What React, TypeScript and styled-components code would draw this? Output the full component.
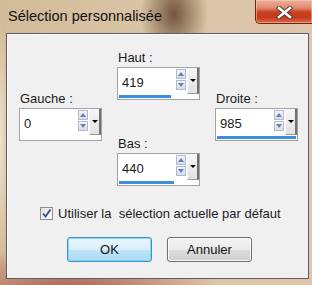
import React from "react";
import styled, { createGlobalStyle } from "styled-components";

const GlobalStyle = createGlobalStyle`
  html, body {
    margin: 0;
    padding: 0;
  }
  body {
    width: 312px;
    height: 285px;
    overflow: hidden;
    font-family: "Liberation Sans", Arial, sans-serif;
    color: #1b1b1b;
  }
`;

const Frame = styled.div`
  width: 312px;
  height: 285px;
  box-sizing: border-box;
  display: flex;
  flex-direction: column;
  padding: 0 3px 6px 6px;
  background-color: #d6c3a6;
  background-image:
    radial-gradient(34px 48px at 174px 14px, rgba(104, 74, 48, 0.9), rgba(104, 74, 48, 0) 100%),
    radial-gradient(150px 46px at 70px 292px, rgba(168, 88, 82, 0.95), rgba(168, 88, 82, 0) 100%),
    radial-gradient(10px 120px at 0px 140px, rgba(240, 232, 214, 0.9), rgba(240, 232, 214, 0) 100%),
    linear-gradient(90deg, #d3bb99 0%, #d8c3a4 40%, #dcc5a8 70%, #e1c6ad 100%);
`;

const TitleBar = styled.div`
  height: 33px;
  display: flex;
  align-items: flex-start;
`;

const Title = styled.div`
  padding: 8px 0 0 2px;
  font-size: 14.5px;
  line-height: 17px;
  color: #111;
`;

const CloseButton = styled.div`
  margin-left: auto;
  margin-right: -3px;
  margin-top: -1px;
  width: 57px;
  height: 25px;
  box-sizing: border-box;
  border: 1px solid #6b2417;
  border-right: none;
  border-radius: 0 0 0 5px;
  display: flex;
  align-items: center;
  justify-content: center;
  padding: 2px 0 0 0;
  background: linear-gradient(
    180deg,
    #eeb09c 0%,
    #e08a70 35%,
    #c9401f 52%,
    #c63a1c 75%,
    #dc6a45 100%
  );
  box-shadow: inset 0 0 0 1px rgba(255, 210, 190, 0.5);
`;

const Client = styled.div`
  flex: 1;
  display: flex;
  flex-direction: column;
  background: #f0f0f0;
  border: 1px solid #5e5e5e;
  box-shadow: inset 1px 1px 0 #fdfdfd;
`;

const Fields = styled.div`
  display: grid;
  grid-template-columns: repeat(3, 83px);
  column-gap: 15px;
  padding-left: 12px;
  align-items: start;
`;

const Column = styled.div<{ $offset: number }>`
  display: flex;
  flex-direction: column;
  gap: 36px;
  padding-top: ${(p) => p.$offset}px;
`;

const Field = styled.div`
  display: flex;
  flex-direction: column;
  gap: 2px;
`;

const Label = styled.div`
  font-size: 13px;
  line-height: 15px;
  padding-left: 1px;
`;

const Box = styled.div`
  width: 83px;
  height: 33px;
  box-sizing: border-box;
  border: 1px solid #a3a3a3;
  background: #fff;
  display: flex;
  flex-direction: column;
`;

const BoxRow = styled.div`
  height: 26px;
  display: flex;
`;

const Value = styled.div`
  flex: 1;
  padding: 7px 0 0 4px;
  font-size: 13px;
  line-height: 15px;
`;

const Spin = styled.div`
  width: 10px;
  margin-top: 1px;
  display: flex;
  flex-direction: column;
  gap: 1px;
`;

const SpinButton = styled.div`
  height: 10px;
  box-sizing: border-box;
  border: 1px solid #b4bad0;
  background: linear-gradient(180deg, #f2f4fa 0%, #d7dcec 100%);
  display: flex;
  align-items: center;
  justify-content: center;
`;

const Drop = styled.div`
  width: 12px;
  margin-left: 1px;
  box-sizing: border-box;
  border-left: 1px solid #f8f8f8;
  border-right: 2px solid #707070;
  border-bottom: 1px solid #9a9a9a;
  background: linear-gradient(180deg, #f6f6f6 0%, #e2e2e2 100%);
  display: flex;
  justify-content: center;
  padding-top: 11px;
`;

const DropArrow = styled.div`
  width: 0;
  height: 0;
  border-left: 3px solid transparent;
  border-right: 3px solid transparent;
  border-top: 3px solid #000;
`;

const Bar = styled.div`
  height: 3px;
  margin: 1px 0 0 1px;
  background: #3a8fe0;
`;

const CheckRow = styled.label`
  display: flex;
  align-items: center;
  gap: 5px;
  margin-top: 20px;
  padding-left: 33px;
  font-size: 13px;
  line-height: 15px;
  white-space: pre;
`;

const CheckBox = styled.span`
  width: 13px;
  height: 13px;
  box-sizing: border-box;
  border: 1px solid #8e8f8f;
  background: linear-gradient(135deg, #dedede 0%, #f4f4f4 60%, #ffffff 100%);
  display: flex;
  align-items: center;
  justify-content: center;
`;

const Buttons = styled.div`
  display: flex;
  gap: 15px;
  margin-top: 16px;
  padding-left: 60px;
`;

const Button = styled.div<{ $primary?: boolean }>`
  width: 85px;
  height: 25px;
  box-sizing: border-box;
  border-radius: 3px;
  display: flex;
  align-items: center;
  justify-content: center;
  font-size: 13px;
  color: #111;
  border: 1px solid ${(p) => (p.$primary ? "#3c95c8" : "#707070")};
  background: ${(p) =>
    p.$primary
      ? "linear-gradient(180deg, #e9f6fd 0%, #d9effb 50%, #bfe4f8 51%, #a9daf5 100%)"
      : "linear-gradient(180deg, #f2f2f2 0%, #ebebeb 50%, #dddddd 51%, #cfcfcf 100%)"};
  box-shadow: inset 0 0 0 1px
    ${(p) => (p.$primary ? "rgba(130, 210, 245, 0.9)" : "rgba(255, 255, 255, 0.8)")};
`;

const MAX = 636;

function SpinField({ label, value }: { label: string; value: number }) {
  const w = Math.round(79 * Math.min(1, value / MAX));
  return (
    <Field>
      <Label>{label}</Label>
      <Box>
        <BoxRow>
          <Value>{value}</Value>
          <Spin>
            <SpinButton>
              <svg width="6" height="4" viewBox="0 0 6 4">
                <path d="M0 4 L3 0 L6 4 Z" fill="#6a7fb3" />
              </svg>
            </SpinButton>
            <SpinButton>
              <svg width="6" height="4" viewBox="0 0 6 4">
                <path d="M0 0 L3 4 L6 0 Z" fill="#6a7fb3" />
              </svg>
            </SpinButton>
          </Spin>
          <Drop>
            <DropArrow />
          </Drop>
        </BoxRow>
        <Bar style={{ width: w }} />
      </Box>
    </Field>
  );
}

export default function App() {
  return (
    <>
      <GlobalStyle />
      <Frame>
        <TitleBar>
          <Title>Sélection personnalisée</Title>
          <CloseButton>
            <svg width="17" height="13" viewBox="0 0 17 13">
              <path
                d="M3 2 L14 11 M14 2 L3 11"
                stroke="#4a3a36"
                strokeWidth="4.4"
                strokeLinecap="square"
              />
              <path
                d="M3 2 L14 11 M14 2 L3 11"
                stroke="#ffffff"
                strokeWidth="2.6"
                strokeLinecap="square"
              />
            </svg>
          </CloseButton>
        </TitleBar>
        <Client>
          <Fields>
            <Column $offset={57}>
              <SpinField label="Gauche :" value={0} />
            </Column>
            <Column $offset={16}>
              <SpinField label="Haut :" value={419} />
              <SpinField label="Bas :" value={440} />
            </Column>
            <Column $offset={57}>
              <SpinField label="Droite :" value={985} />
            </Column>
          </Fields>
          <CheckRow>
            <CheckBox>
              <svg width="11" height="11" viewBox="0 0 11 11">
                <path
                  d="M2 5.5 L4.5 8.5 L9.5 1.5"
                  stroke="#3f4f80"
                  strokeWidth="1.9"
                  fill="none"
                />
              </svg>
            </CheckBox>
            {"Utiliser la  sélection actuelle par défaut"}
          </CheckRow>
          <Buttons>
            <Button $primary>OK</Button>
            <Button>Annuler</Button>
          </Buttons>
        </Client>
      </Frame>
    </>
  );
}
